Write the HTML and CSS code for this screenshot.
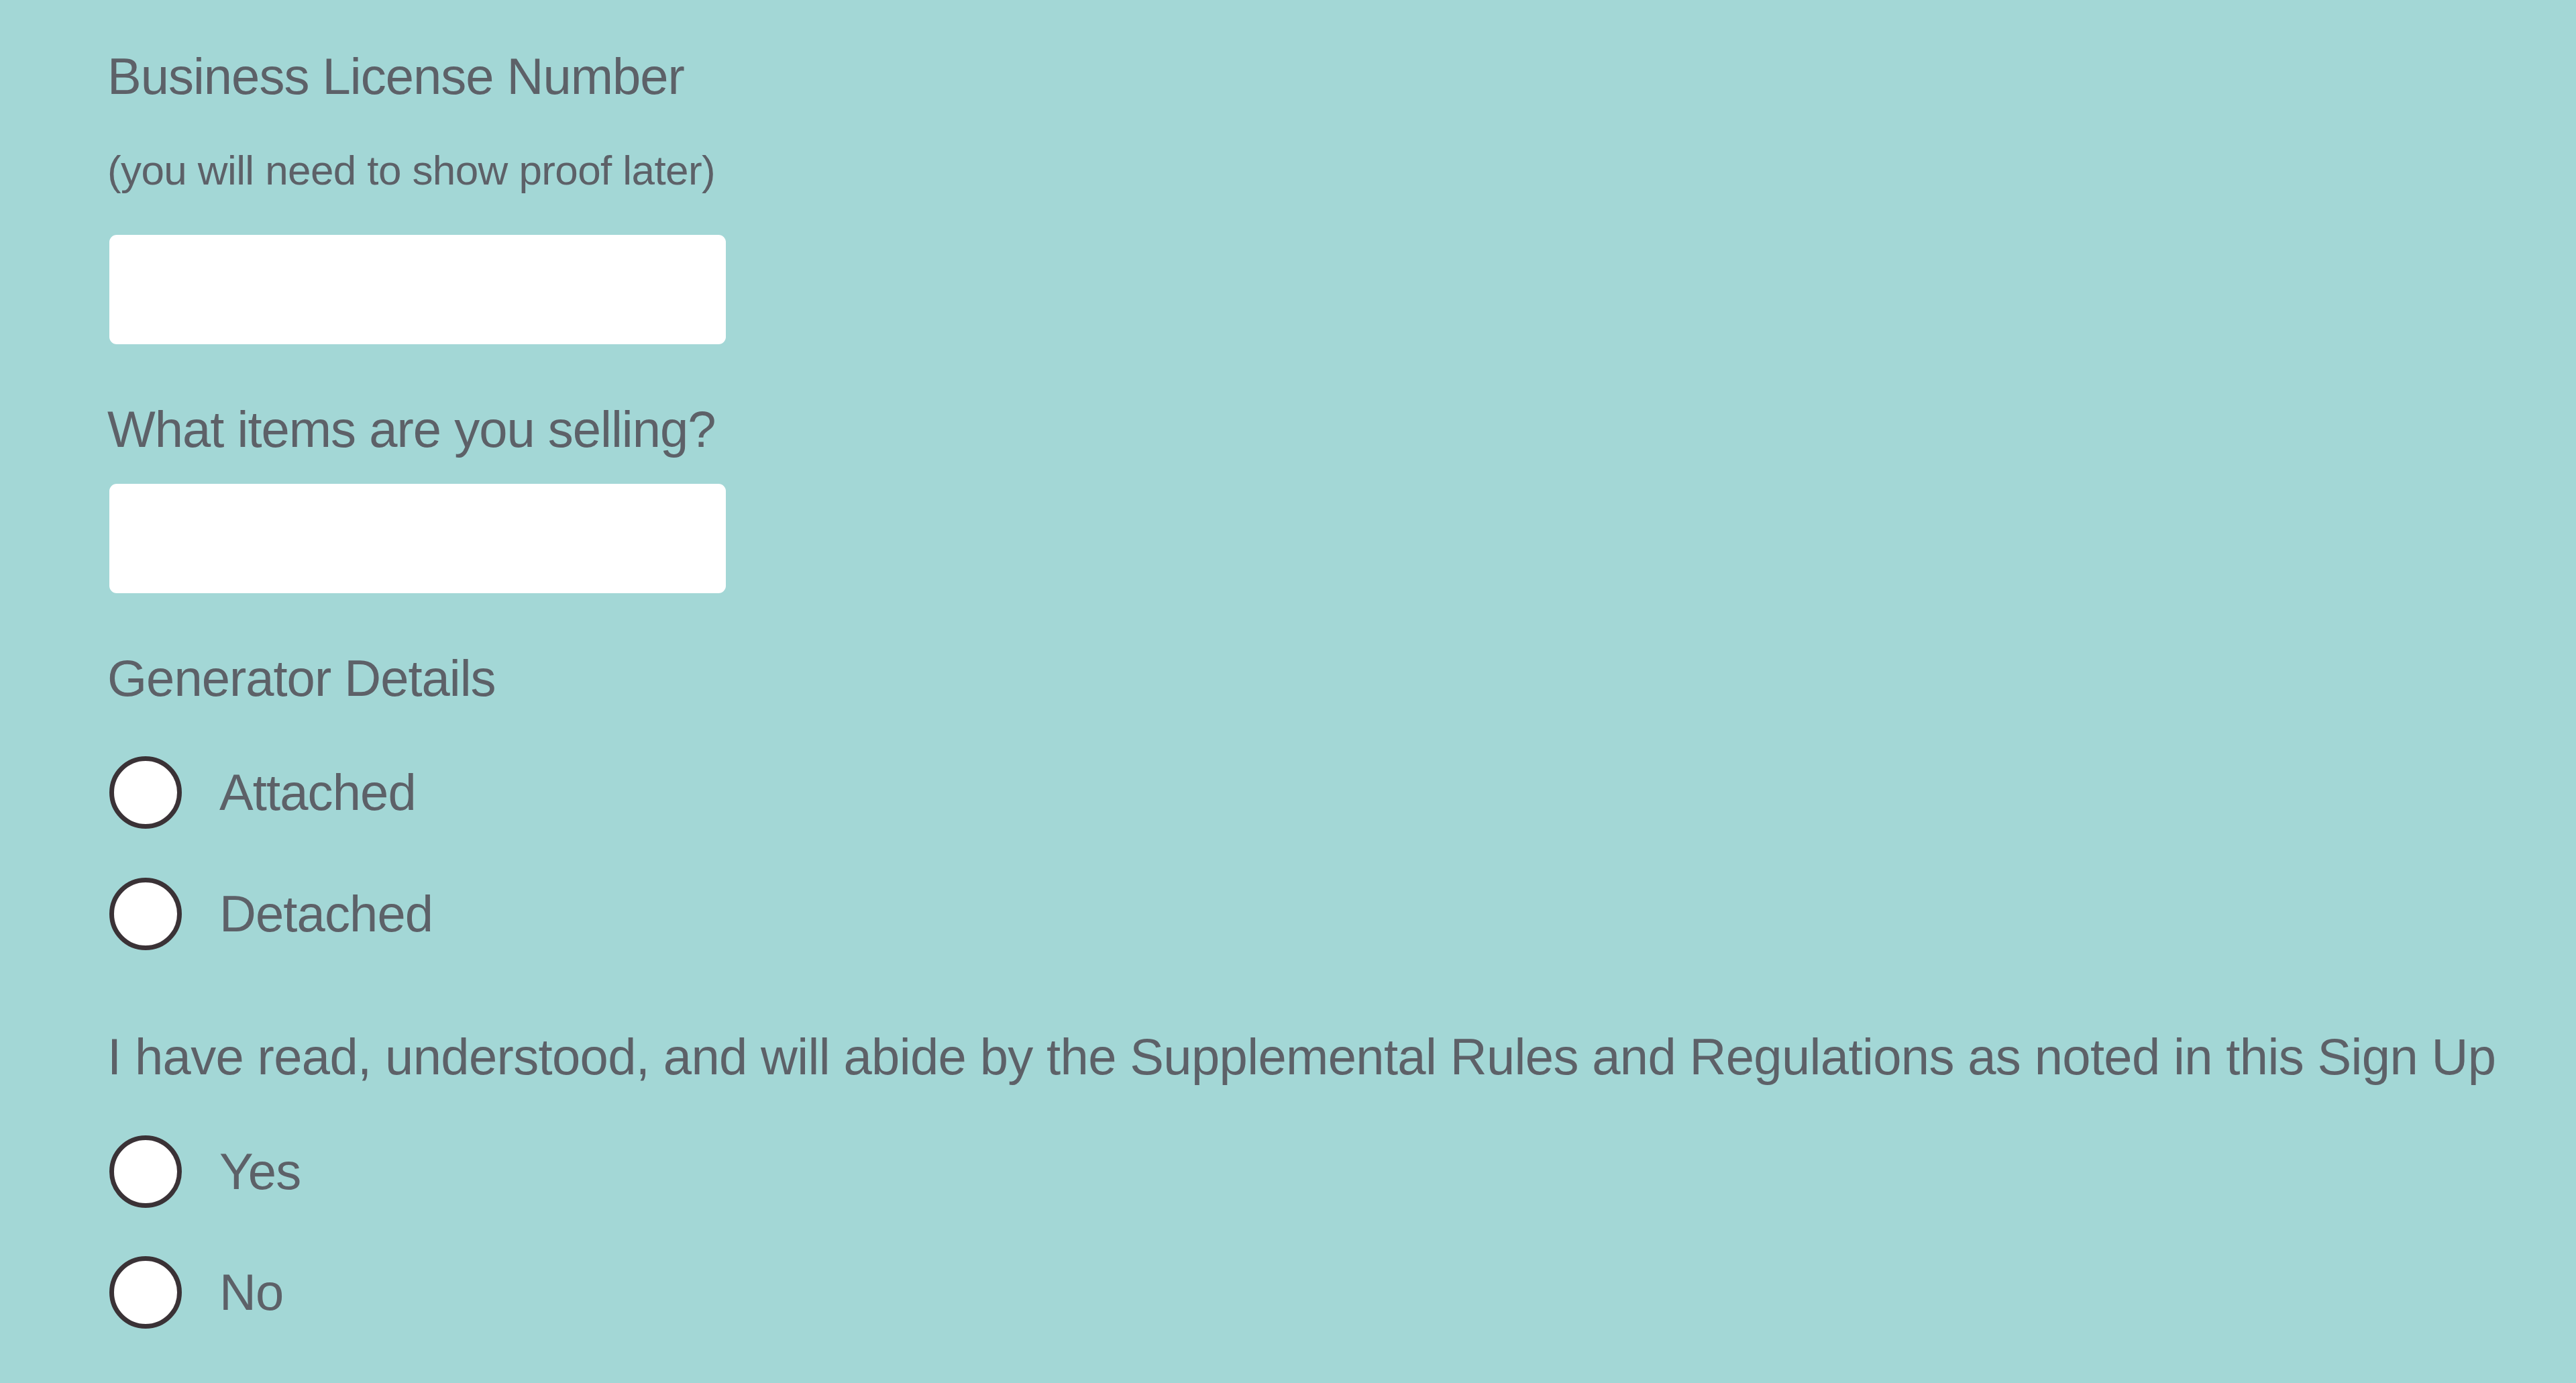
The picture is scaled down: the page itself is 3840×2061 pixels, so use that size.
FILE: index.html
```html
<!DOCTYPE html>
<html lang="en">
<head>
<meta charset="utf-8">
<title>Vendor Sign Up</title>
<link rel="stylesheet" href="styles.css">
</head>
<body>
<form class="form">
  <label class="label" for="license">Business License Number</label>
  <p class="hint">(you will need to show proof later)</p>
  <input class="text-input" id="license" type="text">

  <label class="label label-gap" for="items">What items are you selling?</label>
  <input class="text-input input-after-label" id="items" type="text">

  <p class="label label-gap">Generator Details</p>
  <div class="radio-group group-after-label">
    <label class="radio-row"><input class="radio" type="radio" name="generator"><span class="radio-text">Attached</span></label>
    <label class="radio-row"><input class="radio" type="radio" name="generator"><span class="radio-text">Detached</span></label>
  </div>

  <p class="label rules-gap">I have read, understood, and will abide by the Supplemental Rules and Regulations as noted in this Sign Up</p>
  <div class="radio-group group-after-rules">
    <label class="radio-row"><input class="radio" type="radio" name="agree"><span class="radio-text">Yes</span></label>
    <label class="radio-row"><input class="radio" type="radio" name="agree"><span class="radio-text">No</span></label>
  </div>
</form>
</body>
</html>
```
FILE: styles.css
```css
html, body {
  margin: 0;
  padding: 0;
  background: #a3d7d6;
  min-height: 100%;
}

body {
  font-family: "Liberation Sans", Arial, Helvetica, sans-serif;
  color: #5d6168;
}

.form {
  display: flex;
  flex-direction: column;
  align-items: flex-start;
  padding: 69px 0 0 160px;
  margin: 0;
}

.label {
  display: block;
  margin: 0;
  font-size: 76px;
  line-height: 90px;
  letter-spacing: -1px;
  white-space: nowrap;
}

.hint {
  margin: 58px 0 0 0;
  font-size: 62px;
  line-height: 74px;
  letter-spacing: -0.6px;
}

.text-input {
  display: block;
  box-sizing: border-box;
  width: 919px;
  height: 163px;
  margin: 59px 0 0 3px;
  padding: 0 24px;
  border: none;
  border-radius: 11px;
  background: #ffffff;
  outline: none;
  -webkit-appearance: none;
  appearance: none;
  font: inherit;
  font-size: 60px;
}

.label-gap {
  margin-top: 82px;
}

.input-after-label {
  margin-top: 36px;
}

.rules-gap {
  margin-top: 114px;
  letter-spacing: -0.65px;
}

.radio-group {
  display: flex;
  flex-direction: column;
  gap: 73px;
}

.group-after-label {
  margin-top: 71px;
}

.group-after-rules {
  margin-top: 72px;
  gap: 72px;
}

.radio-row {
  display: flex;
  align-items: center;
  height: 108px;
}

.radio {
  -webkit-appearance: none;
  appearance: none;
  box-sizing: border-box;
  width: 108px;
  height: 108px;
  margin: 0 0 0 3px;
  border: 7px solid #3a3236;
  border-radius: 50%;
  background: #ffffff;
  flex: none;
}

.radio-text {
  margin-left: 56px;
  font-size: 76px;
  line-height: 90px;
  letter-spacing: -0.9px;
}
```
